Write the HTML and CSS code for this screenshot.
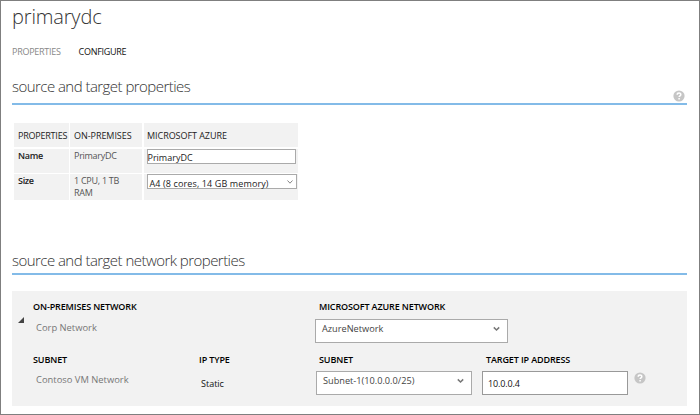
FILE: index.html
```html
<!DOCTYPE html>
<html lang="en">
<head>
<meta charset="utf-8">
<title>primarydc</title>
<link rel="stylesheet" href="styles.css">
</head>
<body>
<main class="page">
  <h1 class="title">primarydc</h1>
  <nav class="tabs">
    <span class="tab">PROPERTIES</span>
    <span class="tab tab-active">CONFIGURE</span>
  </nav>
  <header class="section">
    <h2>source and target properties</h2>
    <svg class="help" viewBox="0 0 12 12"><circle cx="6" cy="6" r="5.6" fill="#c6c6c6"/><path d="M4.2 4.7C4.2 2.4 7.9 2.5 7.8 4.6C7.7 5.8 6.1 5.8 6.1 7.1M6.1 8.1V9.6" fill="none" stroke="#fff" stroke-width="1.5"/></svg>
  </header>
  <div class="props">
    <div class="cell head head-first">PROPERTIES</div>
    <div class="cell head">ON-PREMISES</div>
    <div class="cell head head-azure">MICROSOFT AZURE</div>
    <div class="cell name">Name</div>
    <div class="cell value">PrimaryDC</div>
    <div class="cell control"><div class="input-sm">PrimaryDC</div></div>
    <div class="cell name">Size</div>
    <div class="cell value">1 CPU, 1 TB<br>RAM</div>
    <div class="cell control"><div class="select-sm"><span>A4 (8 cores, 14 GB memory)</span><svg class="chev" viewBox="0 0 6 6"><path d="M.5 1.5L3 4.2L5.5 1.5" fill="none" stroke="#777" stroke-width=".9"/></svg></div></div>
  </div>
  <header class="section section-network">
    <h2>source and target network properties</h2>
  </header>
  <section class="panel">
    <svg class="expander" viewBox="0 0 6 6"><path d="M0 6H6V0Z" fill="#444"/></svg>
    <div class="col col-source">
      <div class="label">ON-PREMISES NETWORK</div>
      <div class="muted">Corp Network</div>
      <div class="label label-second">SUBNET</div>
      <div class="muted">Contoso VM Network</div>
    </div>
    <div class="col col-type">
      <div class="label label-low">IP TYPE</div>
      <div class="static">Static</div>
    </div>
    <div class="col col-target">
      <div class="label">MICROSOFT AZURE NETWORK</div>
      <div class="select"><span>AzureNetwork</span><svg class="chev-lg" viewBox="0 0 7 6"><path d="M.8 1.4L3.5 4L6.2 1.4" fill="none" stroke="#777" stroke-width="1.5"/></svg></div>
      <div class="target-row">
        <div class="field-subnet">
          <div class="label">SUBNET</div>
          <div class="select select-subnet"><span>Subnet-1(10.0.0.0/25)</span><svg class="chev-lg" viewBox="0 0 7 6"><path d="M.8 1.4L3.5 4L6.2 1.4" fill="none" stroke="#777" stroke-width="1.5"/></svg></div>
        </div>
        <div class="field-ip">
          <div class="label">TARGET IP ADDRESS</div>
          <div class="ip">10.0.0.4</div>
        </div>
        <svg class="help help-ip" viewBox="0 0 12 12"><circle cx="6" cy="6" r="5.6" fill="#c6c6c6"/><path d="M4.2 4.7C4.2 2.4 7.9 2.5 7.8 4.6C7.7 5.8 6.1 5.8 6.1 7.1M6.1 8.1V9.6" fill="none" stroke="#fff" stroke-width="1.5"/></svg>
      </div>
    </div>
  </section>
</main>
</body>
</html>
```
FILE: styles.css
```css
* { box-sizing: border-box; }
body { margin: 0; font-family: "Open Sans", "Noto Sans", sans-serif; font-size: 9px; line-height: 12px; color: #222; background: #fff; }
.page { width: 700px; height: 415px; border: 1px solid #7f7f7f; padding: 0 12px 0 11px; }
h1, h2 { margin: 0; font-weight: 300; color: #333; white-space: nowrap; }
.title { height: 32px; font-size: 20px; line-height: 32px; letter-spacing: -.15px; }
.tabs { display: flex; gap: 18px; height: 12px; margin-top: 13px; letter-spacing: -.28px; }
.tab { color: #888; }
.tab-active { color: #111; }
.section { display: flex; justify-content: space-between; height: 30px; margin-top: 17px; border-bottom: 2px solid #83bbe8; }
h2 { font-size: 15px; line-height: 22px; letter-spacing: -.54px; }
.help { width: 12px; height: 12px; margin: 15px 2px 0 0; }
.props { display: grid; grid-template-columns: 54.5px 72px 154.5px; grid-template-rows: 24px 24px 26px; gap: 1.5px; margin: 18px 0 0 2px; white-space: nowrap; }
.cell { background: #f2f2f2; padding-left: 4px; }
.head { padding-top: 7px; font-weight: 500; letter-spacing: -.05px; }
.head-first { letter-spacing: -.22px; }
.head-azure { padding-left: 3.5px; }
.name { font-weight: 600; padding-top: 1px; letter-spacing: -.3px; }
.value { color: #555; padding-top: 1px; letter-spacing: -.27px; }
.control { padding-left: 3px; }
.input-sm { width: 149px; height: 15px; border: 1px solid #aaa; background: #fff; line-height: 16px; }
.select-sm { display: flex; justify-content: space-between; width: 150px; height: 15px; border: 1px solid #aaa; background: #fff; line-height: 17px; padding-left: 2px; letter-spacing: .12px; }
.chev { width: 6px; height: 6px; margin: 4px 3px 0 0; }
.section-network { margin-top: 45px; }
.section-network h2 { padding-top: 4px; }
.panel { display: flex; height: 115px; margin-top: 16px; background: #f2f2f2; white-space: nowrap; }
.expander { width: 6px; height: 6px; margin: 26px 0 0 6px; }
.col { padding-top: 10px; }
.col-source { width: 166px; margin-left: 9px; }
.col-type { width: 116px; }
.label { font-weight: 600; color: #000; height: 12px; letter-spacing: -.12px; }
.muted { color: #777; margin: 9px 0 0 3px; font-size: 9.4px; }
.label-second { margin-top: 20px; }
.label-second + .muted { margin-top: 8px; }
.label-low { margin-top: 53px; }
.static { margin: 12px 0 0 2px; color: #111; }
.col-target > .label, .field-subnet > .label { padding-left: 4px; }
.select { display: flex; justify-content: space-between; width: 193px; height: 24px; margin-top: 6px; border: 1px solid #aaa; background: #fff; color: #444; padding: 3px 7px 0 6px; font-size: 9.2px; }
.chev-lg { width: 7px; height: 6px; margin-top: 3px; }
.target-row { display: flex; margin-top: 11px; }
.field-subnet { width: 167px; }
.select-subnet { width: 156px; margin: 5px 0 0 1px; }
.field-ip { width: 146px; }
.field-ip > .label { padding-left: 4px; }
.ip { height: 24px; margin-top: 5px; border: 1px solid #999; background: #fff; color: #111; padding: 6px 0 0 5px; letter-spacing: -.15px; }
.help-ip { margin: 18px 0 0 6px; }
```
